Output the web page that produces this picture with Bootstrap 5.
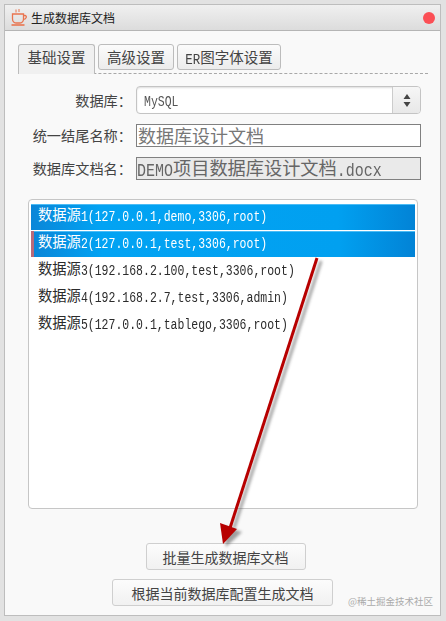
<!DOCTYPE html>
<html lang="zh"><head><meta charset="utf-8">
<link href="https://cdn.jsdelivr.net/npm/bootstrap@5.3.0/dist/css/bootstrap.min.css" rel="stylesheet">
<style>
html,body{height:100%}
body{background:#e2e2e2;padding:4px 5px 5px 4px;font-family:"Noto Sans CJK SC",sans-serif;color:#333;overflow:hidden;position:relative}
.win{height:612px;background:#f9f9f9;border:1px solid #bdbdbd;display:flex;flex-direction:column}
.tbar{height:26px;flex:none;background:linear-gradient(#f0f0f0,#dcdcdc);border-bottom:1px solid #b5b5b5;font-size:12px;color:#222;padding:0 5px 0 4px}
.ttl{margin-left:2px}
.dot{width:12px;height:12px;border-radius:50%;background:#fb4f55}
.tabrow{margin:13px 12px 0 13px;height:30px;border-bottom:1px dashed #a8a8a8;gap:3px}
.tb{height:26px;border:1px solid #bcbcbc;border-radius:3px;background:linear-gradient(#fbfbfb,#ececec);font-size:14.5px;color:#444;text-align:center;line-height:24px}
.tb.on{height:30px;width:77px;border-bottom:0;border-radius:3px 3px 0 0;background:#f0f0f0;margin-bottom:-1px}
.w76{width:76px}.w104{width:104px}
.m{font-family:"Liberation Mono",monospace;font-size:11.5px;display:inline-block;transform:scaleY(1.22);line-height:1}
.tb .m{font-size:12.5px}
.frm{margin:12px 19px 0 0}
.lbl{width:131px;text-align:right;font-size:14.2px;color:#444;padding-right:4px;flex:none;line-height:1}
.sel{flex:1;height:28px;border:1px solid #c4c4c4;border-radius:4px;background:#fff;box-shadow:inset 0 1px 2px #ddd}
.selt{flex:1;padding-left:7px;color:#555;line-height:18px;margin-bottom:4px}
.spin{width:28px;height:100%;border-left:1px solid #ccc;background:linear-gradient(#f6f6f6,#e8e8e8);border-radius:0 3px 3px 0}
.inp{flex:1;height:23px;border:1px solid #808080;background:#fff;font-size:18px;color:#777;padding-left:1px;line-height:20px;white-space:nowrap}
.inp.ro{background:#eaeaea;color:#666;padding-left:0;font-size:18.2px;line-height:18px}
.inp .m2{font-family:"Liberation Mono",monospace;font-size:15px;display:inline-block;transform:scaleY(1.2);line-height:1}
.mb10{margin-bottom:10px}
.box{margin:19px 0 0 23px;width:390px;height:310px;border:1px solid #c6c6c6;border-radius:4px;background:#fff;padding:4px 2px;flex:none}
.it{height:27px;padding:0 0 0 7px;font-size:14.3px;color:#2b2b2b;white-space:nowrap;line-height:20px}
.it.sl{height:26px;margin-bottom:1px;color:#fff;background:linear-gradient(90deg,#0a86d8,#02a3f3 18%,#01a0f0 80%,#0283d6);box-shadow:inset 0 1px 0 #4cbcf5}
.it.bar{border-left:3px solid #b86a7a;padding-left:4px}
.bt{height:27px;border:1px solid #cfcfcf;border-radius:3px;background:linear-gradient(#fcfcfc,#f1f1f1);font-size:14px;color:#444;line-height:1}
.b1{width:160px;margin:34px 0 0 6px}.b2{width:221px;margin:9px 0 0}
.arw{position:absolute;left:0;top:0;pointer-events:none}
.wm{position:absolute;left:348px;top:597px;font-size:9.5px;color:#aaa;white-space:nowrap;line-height:1}
</style></head><body>
<div class="win">
 <div class="tbar d-flex align-items-center">
  <svg width="20" height="20" viewBox="0 0 20 20" fill="none" stroke="#e9744f" stroke-width="1.3"><path d="M7 1.5v3M10 1v3" stroke-width="1"/><path d="M3.5 6h11v5c0 2.5-2 4-4 4h-3c-2 0-4-1.500-4-4z"/><path d="M14.500 7.500h1.500c2 0 2 3.500-1.800 4"/><path d="M2.500 17h13" stroke-width="1.600"/></svg>
  <span class="ttl flex-grow-1">生成数据库文档</span><span class="dot"></span>
 </div>
 <div class="tabrow d-flex align-items-start">
  <div class="tb on">基础设置</div><div class="tb w76">高级设置</div><div class="tb w104"><span class="m">ER</span>图字体设置</div>
 </div>
 <div class="frm d-flex align-items-center mb10"><div class="lbl">数据库：</div><div class="sel d-flex align-items-center"><div class="selt"><span class="m">MySQL</span></div><div class="spin d-flex align-items-center justify-content-center"><svg width="8" height="13" viewBox="0 0 8 13" fill="#444"><path d="M4 0l3.500 5h-7zM4 13l-3.500-5h7z"/></svg></div></div></div>
 <div class="frm d-flex align-items-center mt-0 mb10"><div class="lbl">统一结尾名称：</div><div class="inp">数据库设计文档</div></div>
 <div class="frm d-flex align-items-center mt-0"><div class="lbl">数据库文档名：</div><div class="inp ro"><span class="m2">DEMO</span>项目数据库设计文档<span class="m2">.docx</span></div></div>
 <div class="box">
  <div class="it sl">数据源<span class="m">1(127.0.0.1,demo,3306,root)</span></div>
  <div class="it sl bar">数据源<span class="m">2(127.0.0.1,test,3306,root)</span></div>
  <div class="it">数据源<span class="m">3(192.168.2.100,test,3306,root)</span></div>
  <div class="it">数据源<span class="m">4(192.168.2.7,test,3306,admin)</span></div>
  <div class="it">数据源<span class="m">5(127.0.0.1,tablego,3306,root)</span></div>
 </div>
 <div class="d-flex flex-column align-items-center">
  <div class="bt b1 d-flex align-items-center justify-content-center">批量生成数据库文档</div>
  <div class="bt b2 d-flex align-items-center justify-content-center">根据当前数据库配置生成文档</div>
 </div>
</div>
<svg class="arw" width="446" height="621" viewBox="0 0 446 621" fill="none"><defs><filter id="sd" x="-50%" y="-10%" width="200%" height="120%"><feGaussianBlur stdDeviation="1.500"/></filter></defs>
<g filter="url(#sd)" opacity=".55" transform="translate(4 3)"><path d="M317 258L230 525" stroke="#555" stroke-width="3"/><path d="M222 544l-2-21 18 6z" fill="#555"/></g>
<path d="M317 258L230 528" stroke="#b70000" stroke-width="3"/><path d="M223 544l-3-21 17 6z" fill="#b70000"/></svg>
<div class="wm">@稀土掘金技术社区</div>
</body></html>
